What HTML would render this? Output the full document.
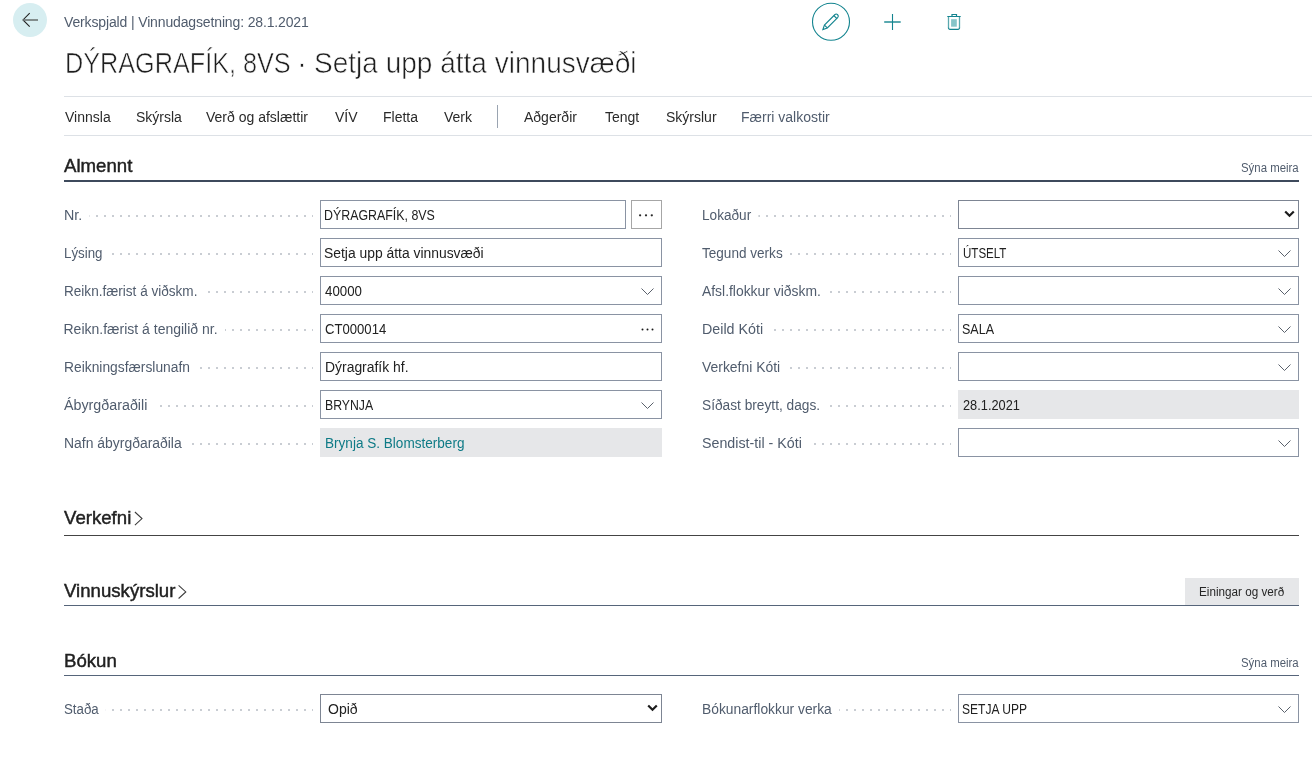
<!DOCTYPE html>
<html><head><meta charset="utf-8">
<style>
html,body{margin:0;padding:0;background:#fff;width:1312px;height:764px;overflow:hidden;position:relative;font-family:"Liberation Sans",sans-serif;}
.a{position:absolute;white-space:pre;line-height:1;}
.crumb{left:64px;top:15px;font-size:14px;color:#505c6d;letter-spacing:-0.14px;}
.title{left:64px;top:47.6px;font-size:29.5px;color:#1e1e1e;transform-origin:0 0;transform:scaleX(0.92);-webkit-text-stroke:0.6px #fff;}
.hl{position:absolute;height:1px;background:#dde1e6;}
.act{position:absolute;top:110px;font-size:14px;color:#2a2a2a;white-space:pre;line-height:1;}
.sec{position:absolute;font-size:19px;font-weight:400;color:#212121;white-space:pre;line-height:1;-webkit-text-stroke:0.45px #212121;transform-origin:0 0;transform:scaleX(0.98);}
.more{position:absolute;font-size:12px;color:#505c6d;white-space:pre;line-height:1;}
.lbl{position:absolute;transform-origin:0 0;font-size:14px;color:#505c6d;white-space:pre;line-height:1;background:#fff;padding-right:7px;z-index:2;}
.dots{position:absolute;height:2px;background-image:linear-gradient(to right,#c9cdd3 2px,transparent 2px);background-size:8px 2px;background-position:0 0;z-index:1;}
.box{position:absolute;box-sizing:border-box;height:29px;border:1px solid #8a93a3;background:#fff;}
.box.btn{border-color:#a6a6a6;}
.box.nat{border-color:#7d8593;}
.dot3{position:absolute;width:2.2px;height:2.2px;border-radius:50%;background:#222;}
.dot3.sm{width:1.8px;height:1.8px;border-radius:50%;background:#111;}
.val{position:absolute;transform-origin:0 0;font-size:14px;color:#212121;white-space:pre;line-height:1;z-index:3;}
.val.link{color:#0e7a86;}
.ro{position:absolute;height:29px;background:#e6e7e9;}
.chev{position:absolute;z-index:3;}
</style></head><body><div id="wrap" style="position:absolute;left:0;top:0;width:1312px;height:764px;will-change:transform;">

<!-- back button -->
<div style="position:absolute;left:13px;top:3px;width:34px;height:34px;border-radius:50%;background:#d7eef1;"></div>
<svg class="a" style="left:0;top:0" width="60" height="40">
  <path d="M29.7 13.2 L23 19.9 L29.7 26.6" fill="none" stroke="#222" stroke-width="1.1"/>
  <path d="M23 20 L38 20" stroke="#6c7474" stroke-width="1.6"/>
</svg>

<div class="a crumb">Verkspjald | Vinnudagsetning: 28.1.2021</div>
<div class="a title" style="left:64.7px;transform:scaleX(0.855)">DÝRAGRAFÍK, 8VS</div>
<div class="a title" style="left:297px;transform:none">·</div>
<div class="a title" style="left:314.3px;transform:scaleX(0.95)">Setja upp átta vinnusvæði</div>

<!-- top icons -->
<svg class="a" style="left:780px;top:0" width="200" height="44">
  <circle cx="51" cy="21.75" r="18.5" fill="none" stroke="#13848f" stroke-width="1.1"/>
  <g transform="translate(42.9 29.5) rotate(-45)" fill="none" stroke="#13848f" stroke-width="1.1">
    <path d="M0 0 L4.2 -2.05 L18.8 -2.05 A2.05 2.05 0 0 1 18.8 2.05 L4.2 2.05 Z"/>
    <path d="M4.2 -2.05 L4.2 2.05 M17.6 -2.05 L17.6 2.05"/>
  </g>
  <path d="M112.5 14 L112.5 30" stroke="#13848f" stroke-width="1.1" fill="none"/><path d="M104.2 22 L120.7 22" stroke="#13848f" stroke-width="1.4" fill="none"/>
  <path d="M167.3 16.5 L180.7 16.5 M172 16.5 L172 14.5 L176.5 14.5 L176.5 16.5" stroke="#13848f" stroke-width="1.2" fill="none"/>
  <path d="M168.5 17 L168.5 28.3" stroke="#5aa8ae" stroke-width="1.3" fill="none"/><path d="M179.5 17 L179.5 28.3" stroke="#5aa8ae" stroke-width="1.3" fill="none"/><path d="M168.5 27.8 Q168.5 29.3 169.8 29.3 L178.2 29.3 Q179.5 29.3 179.5 27.8" stroke="#13848f" stroke-width="1.2" fill="none"/>
  <rect x="171.1" y="19.2" width="5.7" height="7.5" fill="#86c5c9"/>
</svg>

<!-- action bar -->
<div class="hl" style="left:64px;top:96px;width:1248px;"></div>
<div class="hl" style="left:64px;top:135px;width:1248px;"></div>
<div class="act" style="left:65px">Vinnsla</div>
<div class="act" style="left:136px">Skýrsla</div>
<div class="act" style="left:206px">Verð og afslættir</div>
<div class="act" style="left:335px">VÍV</div>
<div class="act" style="left:383px">Fletta</div>
<div class="act" style="left:444px">Verk</div>
<div style="position:absolute;left:497px;top:105px;width:1px;height:23px;background:#9aa4b1"></div>
<div class="act" style="left:524px">Aðgerðir</div>
<div class="act" style="left:605px">Tengt</div>
<div class="act" style="left:666px">Skýrslur</div>
<div class="act" style="left:741px;color:#505c6d">Færri valkostir</div>

<!-- Almennt -->
<div class="sec" style="left:64px;top:156px">Almennt</div>
<div class="more" style="left:1241px;top:162px;transform-origin:0 0;transform:scaleX(0.95)">Sýna meira</div>
<div style="position:absolute;left:64px;top:180px;width:1235px;height:2px;background:#3e4a5c"></div>

<div class="lbl" style="left:63.5px;transform:scaleX(1.02);top:208px">Nr.</div>
<div class="dots" style="left:64px;top:215px;width:249px"></div>
<div class="box" style="left:320px;top:200px;width:306px"></div>
<div class="box btn" style="left:631px;top:200px;width:31px"></div>
<svg class="chev" style="left:636px;top:210px" width="20" height="10"><circle cx="4.1" cy="5.3" r="1.15" fill="#2a2a2a"/><circle cx="10" cy="5.3" r="1.15" fill="#2a2a2a"/><circle cx="15.8" cy="5.3" r="1.15" fill="#2a2a2a"/></svg>
<div class="val" style="left:324.4px;transform:scaleX(0.885);top:208px">DÝRAGRAFÍK, 8VS</div>
<div class="lbl" style="left:63.5px;transform:scaleX(0.95);top:246px">Lýsing</div>
<div class="dots" style="left:64px;top:253px;width:249px"></div>
<div class="box" style="left:320px;top:238px;width:342px"></div>
<div class="val" style="left:324.3px;transform:scaleX(0.991);top:246px">Setja upp átta vinnusvæði</div>
<div class="lbl" style="left:63.5px;transform:scaleX(0.969);top:284px">Reikn.færist á viðskm.</div>
<div class="dots" style="left:64px;top:291px;width:249px"></div>
<div class="box" style="left:320px;top:276px;width:342px"></div>
<svg class="chev" style="left:641px;top:288px" width="14" height="8" viewBox="0 0 14 8"><path d="M0.5 0.5 L6.5 6.5 L12.5 0.5" fill="none" stroke="#5a616c" stroke-width="1"/></svg>
<div class="val" style="left:325.3px;transform:scaleX(0.949);top:284px">40000</div>
<div class="lbl" style="left:63.5px;transform:scaleX(1.0);top:322px">Reikn.færist á tengilið nr.</div>
<div class="dots" style="left:64px;top:329px;width:249px"></div>
<div class="box" style="left:320px;top:314px;width:342px"></div>
<svg class="chev" style="left:638px;top:324px" width="16" height="10"><circle cx="4.5" cy="5.5" r="1" fill="#1a1a1a"/><circle cx="9.5" cy="5.5" r="1" fill="#1a1a1a"/><circle cx="14.5" cy="5.5" r="1" fill="#1a1a1a"/></svg>
<div class="val" style="left:325.3px;transform:scaleX(0.937);top:322px">CT000014</div>
<div class="lbl" style="left:63.5px;transform:scaleX(0.987);top:360px">Reikningsfærslunafn</div>
<div class="dots" style="left:64px;top:367px;width:249px"></div>
<div class="box" style="left:320px;top:352px;width:342px"></div>
<div class="val" style="left:324.7px;transform:scaleX(0.994);top:360px">Dýragrafík hf.</div>
<div class="lbl" style="left:63.5px;transform:scaleX(1.02);top:398px">Ábyrgðaraðili</div>
<div class="dots" style="left:64px;top:405px;width:249px"></div>
<div class="box" style="left:320px;top:390px;width:342px"></div>
<svg class="chev" style="left:641px;top:402px" width="14" height="8" viewBox="0 0 14 8"><path d="M0.5 0.5 L6.5 6.5 L12.5 0.5" fill="none" stroke="#5a616c" stroke-width="1"/></svg>
<div class="val" style="left:324.8px;transform:scaleX(0.876);top:398px">BRYNJA</div>
<div class="lbl" style="left:63.5px;transform:scaleX(0.995);top:436px">Nafn ábyrgðaraðila</div>
<div class="dots" style="left:64px;top:443px;width:249px"></div>
<div class="ro" style="left:320px;top:428px;width:342px"></div>
<div class="val link" style="left:324.5px;transform:scaleX(0.969);top:436px">Brynja S. Blomsterberg</div>
<div class="lbl" style="left:701.5px;transform:scaleX(0.972);top:208px">Lokaður</div>
<div class="dots" style="left:702px;top:215px;width:249px"></div>
<div class="box nat" style="left:958px;top:200px;width:341px"></div>
<svg class="chev" style="left:1283.5px;top:210px" width="11" height="8" viewBox="0 0 11 8"><path d="M1.2 1.5 L5.5 5.8 L9.8 1.5" fill="none" stroke="#1c1c1c" stroke-width="2.2"/></svg>
<div class="lbl" style="left:701.5px;transform:scaleX(0.969);top:246px">Tegund verks</div>
<div class="dots" style="left:702px;top:253px;width:249px"></div>
<div class="box" style="left:958px;top:238px;width:341px"></div>
<svg class="chev" style="left:1278px;top:250px" width="14" height="8" viewBox="0 0 14 8"><path d="M0.5 0.5 L6.5 6.5 L12.5 0.5" fill="none" stroke="#5a616c" stroke-width="1"/></svg>
<div class="val" style="left:962.5px;transform:scaleX(0.825);top:246px">ÚTSELT</div>
<div class="lbl" style="left:701.5px;transform:scaleX(0.992);top:284px">Afsl.flokkur viðskm.</div>
<div class="dots" style="left:702px;top:291px;width:249px"></div>
<div class="box" style="left:958px;top:276px;width:341px"></div>
<svg class="chev" style="left:1278px;top:288px" width="14" height="8" viewBox="0 0 14 8"><path d="M0.5 0.5 L6.5 6.5 L12.5 0.5" fill="none" stroke="#5a616c" stroke-width="1"/></svg>
<div class="lbl" style="left:701.5px;transform:scaleX(1.02);top:322px">Deild Kóti</div>
<div class="dots" style="left:702px;top:329px;width:249px"></div>
<div class="box" style="left:958px;top:314px;width:341px"></div>
<svg class="chev" style="left:1278px;top:326px" width="14" height="8" viewBox="0 0 14 8"><path d="M0.5 0.5 L6.5 6.5 L12.5 0.5" fill="none" stroke="#5a616c" stroke-width="1"/></svg>
<div class="val" style="left:962.4px;transform:scaleX(0.894);top:322px">SALA</div>
<div class="lbl" style="left:701.5px;transform:scaleX(0.994);top:360px">Verkefni Kóti</div>
<div class="dots" style="left:702px;top:367px;width:249px"></div>
<div class="box" style="left:958px;top:352px;width:341px"></div>
<svg class="chev" style="left:1278px;top:364px" width="14" height="8" viewBox="0 0 14 8"><path d="M0.5 0.5 L6.5 6.5 L12.5 0.5" fill="none" stroke="#5a616c" stroke-width="1"/></svg>
<div class="lbl" style="left:701.5px;transform:scaleX(0.979);top:398px">Síðast breytt, dags.</div>
<div class="dots" style="left:702px;top:405px;width:249px"></div>
<div class="ro" style="left:958px;top:390px;width:341px"></div>
<div class="val" style="left:963.3px;transform:scaleX(0.913);top:398px">28.1.2021</div>
<div class="lbl" style="left:701.5px;transform:scaleX(1.018);top:436px">Sendist-til - Kóti</div>
<div class="dots" style="left:702px;top:443px;width:249px"></div>
<div class="box" style="left:958px;top:428px;width:341px"></div>
<svg class="chev" style="left:1278px;top:440px" width="14" height="8" viewBox="0 0 14 8"><path d="M0.5 0.5 L6.5 6.5 L12.5 0.5" fill="none" stroke="#5a616c" stroke-width="1"/></svg>
<div class="lbl" style="left:63.5px;transform:scaleX(0.95);top:702px">Staða</div>
<div class="dots" style="left:64px;top:709px;width:249px"></div>
<div class="box nat" style="left:320px;top:694px;width:342px"></div>
<svg class="chev" style="left:646.5px;top:704px" width="11" height="8" viewBox="0 0 11 8"><path d="M1.2 1.5 L5.5 5.8 L9.8 1.5" fill="none" stroke="#1c1c1c" stroke-width="2.2"/></svg>
<div class="val" style="left:328px;top:702px">Opið</div>
<div class="lbl" style="left:701.5px;transform:scaleX(0.987);top:702px">Bókunarflokkur verka</div>
<div class="dots" style="left:702px;top:709px;width:249px"></div>
<div class="box" style="left:958px;top:694px;width:341px"></div>
<svg class="chev" style="left:1278px;top:706px" width="14" height="8" viewBox="0 0 14 8"><path d="M0.5 0.5 L6.5 6.5 L12.5 0.5" fill="none" stroke="#5a616c" stroke-width="1"/></svg>
<div class="val" style="left:961.7px;transform:scaleX(0.861);top:702px">SETJA UPP</div>

<!-- Verkefni -->
<div class="sec" style="left:64px;top:508px">Verkefni</div>
<svg class="a" style="left:130px;top:508px" width="16" height="20"><path d="M4.9 4 L12 10.6 L4.9 17.2" fill="none" stroke="#3a3a3a" stroke-width="1.05"/></svg>
<div style="position:absolute;left:64px;top:535px;width:1235px;height:1px;background:#444"></div>

<!-- Vinnuskyrslur -->
<div class="sec" style="left:64px;top:581px">Vinnuskýrslur</div>
<svg class="a" style="left:174px;top:581px" width="16" height="20"><path d="M4.6 4.3 L11.8 10.9 L4.6 17.5" fill="none" stroke="#3a3a3a" stroke-width="1.05"/></svg>
<div style="position:absolute;left:1185px;top:578px;width:114px;height:27px;background:#e6e7e9"></div>
<div class="more" style="left:1198.7px;top:586px;color:#262626;transform-origin:0 0;transform:scaleX(0.975)">Einingar og verð</div>
<div style="position:absolute;left:64px;top:605px;width:1235px;height:1px;background:#56657a"></div>

<!-- Bokun -->
<div class="sec" style="left:64px;top:651px">Bókun</div>
<div class="more" style="left:1241px;top:657px;transform-origin:0 0;transform:scaleX(0.95)">Sýna meira</div>
<div style="position:absolute;left:64px;top:675px;width:1235px;height:1px;background:#56657a"></div>

</div></body></html>
